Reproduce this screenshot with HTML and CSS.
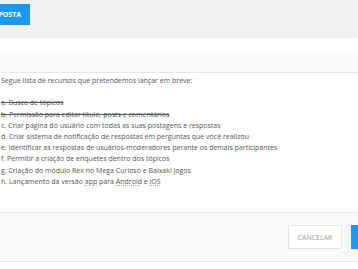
FILE: index.html
```html
<!DOCTYPE html>
<html lang="pt">
<head>
    <meta charset="UTF-8">
    <meta name="viewport" content="width=device-width, initial-scale=1.0">
    <title>Responder tópico</title>
    <link rel="stylesheet" href="styles.css">
</head>
<body>
    <div class="topbar">
        <button class="btn btn-primary btn-reply">Resposta</button>
    </div>

    <div class="modal">
        <div class="modal-header"></div>

        <div class="modal-body">
            <p>Segue lista de recursos que pretendemos lançar em breve:</p>
            <ul class="features">
                <li class="done">a. Busca de tópicos</li>
                <li class="done">b. Permissão para editar título, posts e comentários</li>
                <li>c. Criar página do usuário com todas as suas postagens e respostas</li>
                <li>d. Criar sistema de notificação de respostas em perguntas que você realizou</li>
                <li>e. Identificar as respostas de usuários-moderadores perante os demais participantes</li>
                <li>f. Permitir a criação de enquetes dentro dos tópicos</li>
                <li>g. Criação do módulo Rex no Mega Curioso e Baixaki Jogos</li>
                <li>h. Lançamento da versão <span class="typo">app</span> para <span class="typo">Android</span> e <span class="typo">iOS</span></li>
            </ul>
        </div>

        <div class="modal-footer">
            <button class="btn btn-default">Cancelar</button>
            <button class="btn btn-primary btn-send">Enviar</button>
        </div>
    </div>
</body>
</html>
```

FILE: styles.css
```css
* {
    box-sizing: border-box;
    margin: 0;
    padding: 0;
}

html, body {
    overflow: hidden;
}

body {
    font-family: 'Open Sans', 'Liberation Sans', sans-serif;
    background: white;
    width: 358px;
    height: 269px;
}

.topbar {
    height: 38px;
    background: #f1f1f1;
    overflow: hidden;
}

.btn {
    font-family: inherit;
    text-transform: uppercase;
    border: none;
    cursor: pointer;
}

.btn-primary {
    background: #1c98f0;
    color: white;
    font-weight: 700;
}

.btn-reply {
    height: 21px;
    padding: 0 9px;
    font-size: 7px;
    margin-left: -23px;
}

.modal {
    width: 430px;
    margin-top: 17px;
}

.modal-header {
    height: 18px;
    background: #f9f9f9;
    border-bottom: 1px solid #e8e8e8;
}

.modal-body {
    padding: 2px 0 25px 1px;
    font-size: 7px;
    line-height: 11.2px;
    color: #555;
}

.modal-body p {
    margin-bottom: 11.2px;
}

.features {
    list-style: none;
}

.done {
    text-decoration: line-through;
}

.typo {
    text-decoration: underline dotted #e89090;
    text-decoration-thickness: 1px;
}

.modal-footer {
    height: 50px;
    background: #f9f9f9;
    border-top: 1px solid #e8e8e8;
    border-bottom: 1px solid #e5e5e5;
    display: flex;
    align-items: center;
    justify-content: flex-end;
    gap: 9px;
    padding-right: 10px;
}

.btn-default {
    width: 54px;
    height: 24px;
    background: white;
    border: 1px solid #e4e4e4;
    color: #9a9a9a;
    font-size: 7px;
}

.btn-send {
    width: 69px;
    height: 24px;
    font-size: 7px;
}
```
